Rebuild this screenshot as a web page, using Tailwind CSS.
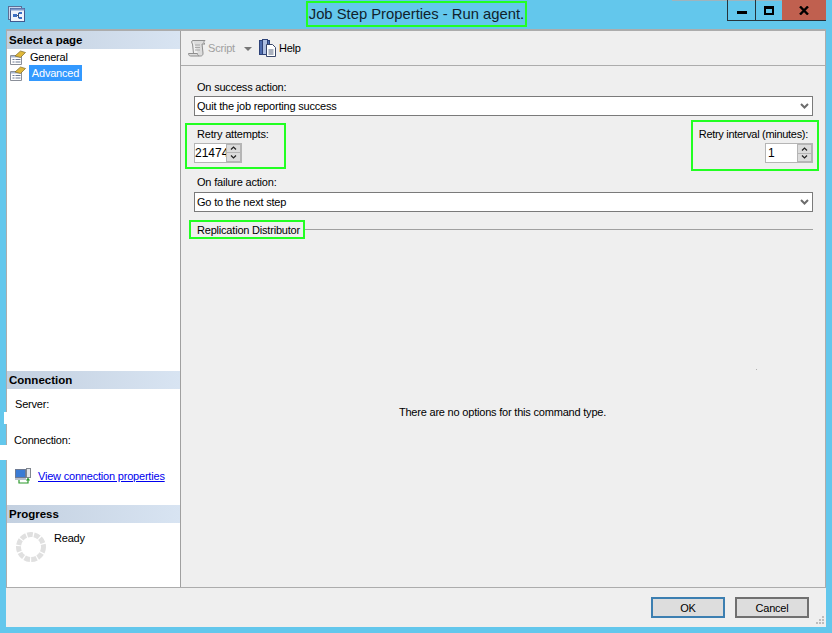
<!DOCTYPE html>
<html lang="en">
<head>
    <meta charset="UTF-8">
    <title>Job Step Properties - Run agent.</title>
    <script src="https://cdn.jsdelivr.net/npm/@tailwindcss/browser@4"></script>
</head>
<body class="m-0 overflow-hidden bg-[#63c7ec]">
<div class="relative flex h-[633px] w-[832px] flex-col bg-[#63c7ec] font-['Liberation_Sans',Arial,sans-serif] text-[11px] leading-[16px] tracking-[-0.2px] text-black">

    <!-- Title bar -->
    <div class="relative flex h-[29px] shrink-0 items-start">
        <svg class="ml-[8px] mt-[6px]" width="17" height="16" viewBox="0 0 17 16">
            <rect x="0.5" y="0.5" width="13" height="13" fill="#c9d6ee" stroke="#5c6f96"/>
            <rect x="2.5" y="2.5" width="14" height="13" fill="#eef3fb" stroke="#41598f"/>
            <rect x="2.5" y="2.5" width="14" height="2" fill="#7d97c9"/>
            <rect x="5" y="8" width="4" height="3" fill="#3a6fc4"/>
            <rect x="11" y="6" width="3" height="2" fill="#3a6fc4"/>
            <rect x="11" y="11" width="3" height="2" fill="#3a6fc4"/>
            <path d="M9 9.5h1.5M10.5 7v5M10.5 7h.5M10.5 12h.5" stroke="#3a4f78" fill="none"/>
        </svg>
        <div class="absolute left-[306px] top-[1px] flex h-[26px] w-[221px] items-center justify-center whitespace-nowrap border-2 border-[#22ff22] text-[14.800px] tracking-normal text-[#10222c]">Job Step Properties - Run agent.</div>
        <div class="absolute left-[672px] top-0 h-px w-[128px] bg-[#9fb4bd]"></div>
        <div class="absolute left-[727px] top-0 flex h-[21px] w-[99px] border-b border-l border-[#26343c]">
            <div class="flex w-[28px] items-center justify-center border-r border-[#26343c]">
                <div class="mt-[4px] h-[3px] w-[10px] bg-black"></div>
            </div>
            <div class="flex w-[26px] items-center justify-center">
                <div class="h-[9px] w-[10px] border-2 border-t-[3px] border-black"></div>
            </div>
            <div class="flex flex-1 items-center justify-center bg-[#c0604f]">
                <svg width="10" height="9" viewBox="0 0 10 9"><path d="M1 0.5 9 8.5M9 0.5 1 8.5" stroke="#000" stroke-width="2.4"/></svg>
            </div>
        </div>
    </div>

    <!-- Client area -->
    <div class="relative ml-[6px] flex h-[598px] w-[820px] flex-col bg-[#efefef]">
        <div class="flex h-[558px] shrink-0 border border-b-0 border-[#acacac] border-t-2">
            <!-- Left pane -->
            <div class="flex w-[174px] shrink-0 flex-col border-r border-[#a0a0a0] bg-white">
                <div class="flex-1">
                    <div class="flex h-[18px] items-center bg-gradient-to-r from-[#c3d0e0] to-[#d8e4f2] pl-[2px] text-[11.500px] font-bold tracking-normal">Select a page</div>
                    <div class="flex h-[16px] items-center">
                        <svg class="ml-[3px] mr-[4px]" width="16" height="15" viewBox="0 0 16 15">
                            <path d="M0.500 5.500h11v9h-11Z" fill="#fff" stroke="#8a8f99"/>
                            <rect x="1" y="6" width="10" height="1.500" fill="#a9b8d4"/>
                            <path d="M2.500 9.500h2M5.500 9.500h5M2.500 12h2M5.500 12h5" stroke="#6d7a94"/>
                            <path d="M5 6 10.500 1 15.500 2.500 10.500 7.500Z" fill="#e0b83a" stroke="#7d6a2c" stroke-width="0.700"/>
                        </svg>
                        <span>General</span>
                    </div>
                    <div class="flex h-[16px] items-center">
                        <svg class="ml-[3px] mr-[3px]" width="16" height="15" viewBox="0 0 16 15">
                            <path d="M0.500 5.500h11v9h-11Z" fill="#fff" stroke="#8a8f99"/>
                            <rect x="1" y="6" width="10" height="1.500" fill="#a9b8d4"/>
                            <path d="M2.500 9.500h2M5.500 9.500h5M2.500 12h2M5.500 12h5" stroke="#6d7a94"/>
                            <path d="M5 6 10.500 1 15.500 2.500 10.500 7.500Z" fill="#e0b83a" stroke="#7d6a2c" stroke-width="0.700"/>
                        </svg>
                        <span class="flex h-[16px] w-[53px] items-center justify-center bg-[#3399ff] text-white">Advanced</span>
                    </div>
                </div>

                <div class="h-[134px] shrink-0">
                    <div class="flex h-[18px] items-center bg-gradient-to-r from-[#c3d0e0] to-[#d8e4f2] pl-[2px] text-[11.500px] font-bold tracking-normal">Connection</div>
                    <div class="ml-[8px] mt-[7px]">Server:</div>
                    <div class="ml-[7px] mt-[20px]">Connection:</div>
                    <div class="mt-[20px] flex items-center">
                        <svg class="ml-[8px] mr-[7px]" width="16" height="16" viewBox="0 0 16 16">
                            <rect x="0.5" y="1.5" width="10" height="8" fill="#3a7bd5" stroke="#6d7a94"/>
                            <rect x="0" y="10" width="11" height="2" fill="#b9c0cc"/>
                            <rect x="11.5" y="0.5" width="4" height="9" fill="#e4e6ea" stroke="#80868f"/>
                            <path d="M4 12v3h9v-4M11.5 12.5 13 10.5l1.5 2" stroke="#2d9a2d" fill="none" stroke-width="1.2"/>
                        </svg>
                        <a class="text-[#0000ee] underline">View connection properties</a>
                    </div>
                </div>

                <div class="h-[82px] shrink-0">
                    <div class="flex h-[18px] items-center bg-gradient-to-r from-[#c3d0e0] to-[#d8e4f2] pl-[2px] text-[11.500px] font-bold tracking-normal">Progress</div>
                    <div class="flex items-start">
                        <svg class="ml-[9px] mt-[9px]" width="30" height="30" viewBox="0 0 30 30">
                            <circle cx="15" cy="15" r="12.5" fill="none" stroke="#e0e0e0" stroke-width="5" stroke-dasharray="5.6 1.25"/>
                        </svg>
                        <span class="ml-[8px] mt-[7px]">Ready</span>
                    </div>
                </div>
            </div>

            <!-- Right pane -->
            <div class="flex min-w-0 flex-1 flex-col">
                <div class="flex h-[35px] shrink-0 items-center border-b border-[#acacac] pl-[7px]">
                    <svg width="19" height="18" viewBox="0 0 19 18">
                        <path d="M5 1.5h12c-1.500 1-1.500 3 0 3.500h-3l1 9c.2 2-1 3-2.500 3H2.500C1 17 .5 15.500 .5 14.500h9c0 1 .5 2 1.500 2.500M5 1.500c-1.500 0-2 2-.5 3.500l1 9.500" fill="#dcdcdc" stroke="#8e8e8e"/>
                        <path d="M7 6h5M7 8.500h5M7 11h5" stroke="#a8a8a8"/>
                    </svg>
                    <span class="ml-px text-[#a0a0a0]">Script</span>
                    <span class="ml-[9px] mt-[1px] h-0 w-0 border-x-[4px] border-t-[4px] border-x-transparent border-t-[#777]"></span>
                    <svg class="ml-[7px]" width="17" height="18" viewBox="0 0 17 18">
                        <rect x="0.500" y="1.500" width="10" height="14" fill="#4e6cae" stroke="#2d4278"/>
                        <rect x="3.500" y="0.500" width="5" height="15" fill="#aebfe2" stroke="#2d4278"/>
                        <path d="M7.500 5.500h6l3 3v9h-9Z" fill="#fff" stroke="#39476a"/>
                        <path d="M9.500 11h5M9.500 13h5M9.500 15h5" stroke="#56647f"/>
                    </svg>
                    <span class="ml-[3px]">Help</span>
                </div>

                <div class="relative flex-1 pl-[13px] pr-[12px] pt-[13px]">
                    <div class="h-[17px] pl-[3px]">On success action:</div>
                    <div class="flex h-[20px] items-center justify-between border border-[#7a7a7a] bg-white pl-[2px] pr-[3px]">
                        <span>Quit the job reporting success</span>
                        <svg width="9" height="6" viewBox="0 0 9 6"><path d="M1 1l3.500 3.500L8 1" fill="none" stroke="#6c6c6c" stroke-width="2"/></svg>
                    </div>

                    <div class="-ml-[9px] -mr-[6px] mt-[4px] flex h-[51px] items-center justify-between">
                        <div class="h-[46px] w-[101px] border-2 border-[#22ff22] pl-[7px]">
                            <div class="mt-px h-[16px] pl-[3px]">Retry attempts:</div>
                            <div class="mt-px flex h-[20px] w-[48px] border border-[#b5b5b5] bg-white">
                                <span class="w-[31px] overflow-hidden text-[12px] leading-[18px] tracking-normal">21474</span>
                                <div class="flex w-[15px] flex-col gap-px bg-[#b5b5b5] p-px">
                                    <div class="flex flex-1 items-center justify-center bg-[#dcdcdc]"><svg width="7" height="4" viewBox="0 0 7 4"><path d="M1 3.500l2.500-2.500L6 3.500" fill="none" stroke="#222" stroke-width="1.200"/></svg></div>
                                    <div class="flex flex-1 items-center justify-center bg-[#dcdcdc]"><svg width="7" height="4" viewBox="0 0 7 4"><path d="M1 .5l2.500 2.500L6 .5" fill="none" stroke="#222" stroke-width="1.200"/></svg></div>
                                </div>
                            </div>
                        </div>
                        <div class="flex h-[51px] w-[128px] flex-col items-end border-2 border-[#22ff22] pr-[4px]">
                            <div class="mt-[4px] h-[16px] whitespace-nowrap pr-[5px] tracking-[-0.3px]">Retry interval (minutes):</div>
                            <div class="mt-px flex h-[20px] w-[48px] border border-[#b5b5b5] bg-white">
                                <span class="w-[31px] pl-[2px] text-[12px] leading-[18px]">1</span>
                                <div class="flex w-[15px] flex-col gap-px bg-[#b5b5b5] p-px">
                                    <div class="flex flex-1 items-center justify-center bg-[#dcdcdc]"><svg width="7" height="4" viewBox="0 0 7 4"><path d="M1 3.500l2.500-2.500L6 3.500" fill="none" stroke="#222" stroke-width="1.200"/></svg></div>
                                    <div class="flex flex-1 items-center justify-center bg-[#dcdcdc]"><svg width="7" height="4" viewBox="0 0 7 4"><path d="M1 .5l2.500 2.500L6 .5" fill="none" stroke="#222" stroke-width="1.200"/></svg></div>
                                </div>
                            </div>
                        </div>
                    </div>

                    <div class="mt-[3px] h-[18px] pl-[3px]">On failure action:</div>
                    <div class="flex h-[20px] items-center justify-between border border-[#7a7a7a] bg-white pl-[2px] pr-[3px]">
                        <span>Go to the next step</span>
                        <svg width="9" height="6" viewBox="0 0 9 6"><path d="M1 1l3.500 3.500L8 1" fill="none" stroke="#6c6c6c" stroke-width="2"/></svg>
                    </div>

                    <div class="-ml-[5px] mt-[8px] flex items-center">
                        <div class="flex h-[19px] w-[116px] shrink-0 items-center whitespace-nowrap border-2 border-[#22ff22] pl-[6px]">Replication Distributor</div>
                        <div class="h-px flex-1 bg-[#a0a0a0]"></div>
                    </div>

                    <div class="mt-[165px] pr-[2px] text-center">There are no options for this command type.</div>
                    <div class="absolute left-[575px] top-[303px] h-px w-px bg-[#b0b0b0]"></div>
                </div>
            </div>
        </div>

        <!-- Footer -->
        <div class="relative flex flex-1 items-start justify-end gap-[10px] border-t border-[#acacac] pr-[17px] pt-[9px]">
            <button class="h-[21px] w-[74px] border-2 border-[#3c7fb1] bg-[#dddddd] leading-[16px]">OK</button>
            <button class="h-[21px] w-[74px] border-2 border-[#707070] bg-[#dddddd] leading-[16px]">Cancel</button>
            <svg class="absolute bottom-[2px] right-[1px]" width="9" height="9" viewBox="0 0 9 9">
                <path d="M6 0h2v2H6ZM3 3h2v2H3ZM6 3h2v2H6ZM0 6h2v2H0ZM3 6h2v2H3ZM6 6h2v2H6Z" fill="#bdbdbd"/>
            </svg>
        </div>
    </div>

    <!-- Redacted patches on the window edge -->
    <div class="absolute left-[4px] top-[412px] h-[12px] w-[3px] bg-white"></div>
    <div class="absolute left-0 top-[445px] h-[15px] w-[7px] bg-white"></div>
</div>
</body>
</html>
